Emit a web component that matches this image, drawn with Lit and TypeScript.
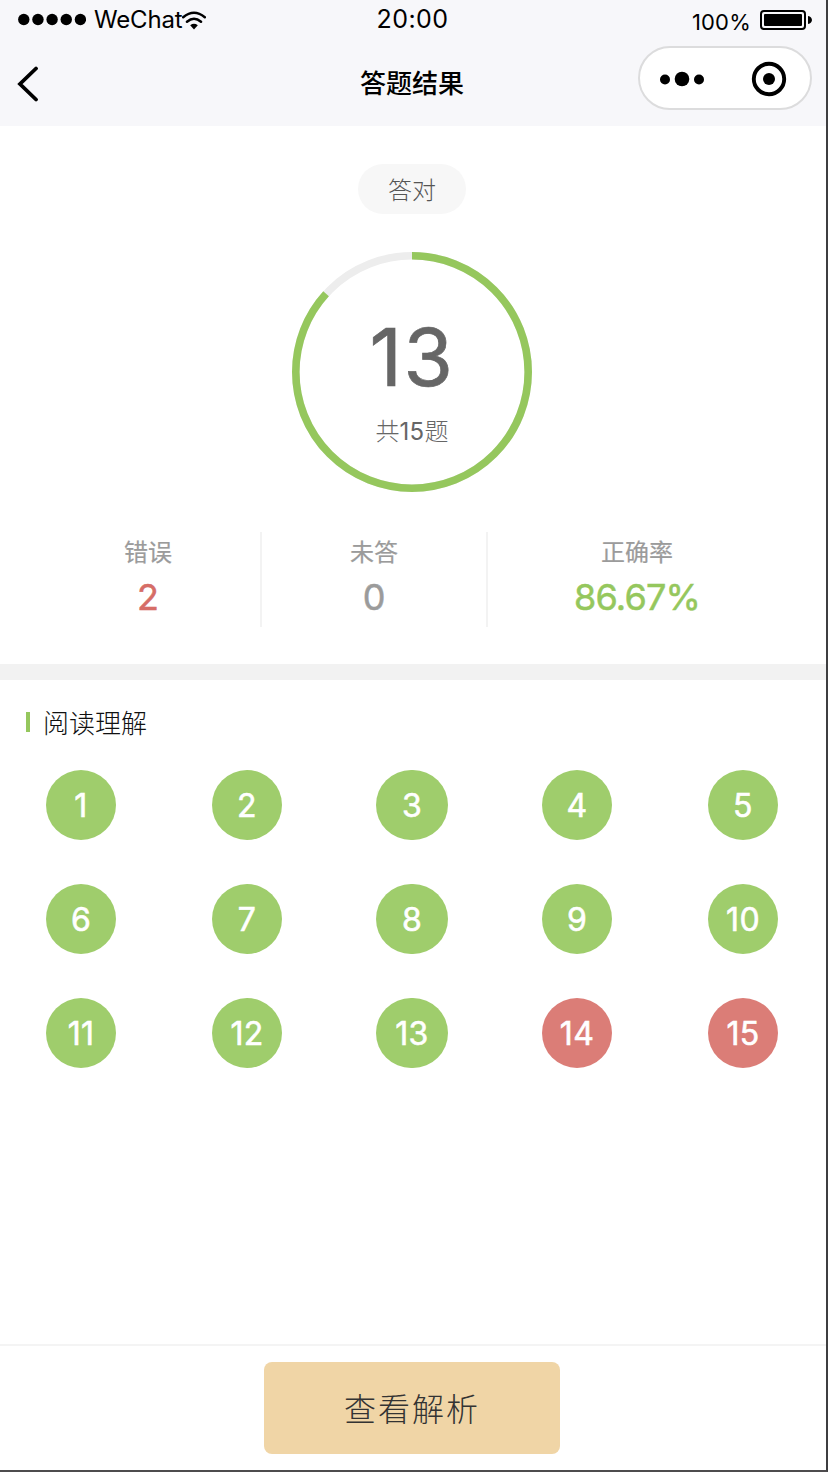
import { LitElement, html, css, svg } from "lit";
import { customElement, property } from "lit/decorators.js";
import { classMap } from "lit/directives/class-map.js";

const FONT = css`Inter, "Noto Sans CJK SC", sans-serif`;

@customElement("status-bar")
class StatusBar extends LitElement {
  static styles = css`
    :host { display: block; height: 40px; font-family: ${FONT}; color: #000; }
    .bar { display: grid; grid-template-columns: 1fr auto 1fr; height: 40px; }
    .left { display: flex; padding-left: 18px; align-items: flex-start; }
    .dots { margin-top: 13px; }
    .carrier { font-size: 24px; line-height: 40px; margin-left: 8px; letter-spacing: -0.15px; }
    .wifi { margin-top: 11px; margin-left: -1px; }
    .time { font-size: 25px; line-height: 39px; letter-spacing: 0.4px; margin-left: 1px; }
    .right { display: flex; justify-content: flex-end; padding-right: 12px; }
    .pct { font-size: 22px; line-height: 45px; margin-right: 9px; letter-spacing: 0.2px; }
    .battery { margin-top: 9px; }
    svg { display: block; }
  `;
  render() {
    return html`<div class="bar">
      <div class="left">
        <svg class="dots" width="68" height="13" viewBox="0 0 68 13">
          ${[0, 1, 2, 3, 4].map((i) => svg`<circle cx=${5.8 + i * 14.15} cy="6.5" r="5.7" />`)}
        </svg>
        <span class="carrier">WeChat</span>
        <svg class="wifi" width="24" height="19" viewBox="0 0 24 19">
          <path d="M1.2 6.2Q12 -2.6 22.8 6.2M5 10.7Q12 4.8 19 10.7" fill="none" stroke="#000" stroke-width="2.5" stroke-linecap="round" />
          <path d="M8.2 14.2Q12 11.5 15.8 14.2L12 18.6Z" />
        </svg>
      </div>
      <div class="time">20:00</div>
      <div class="right">
        <span class="pct">100%</span>
        <svg class="battery" width="52" height="22" viewBox="0 0 52 22">
          <rect x="1" y="2" width="44" height="18" rx="3" fill="none" stroke="#000" stroke-width="2" />
          <rect x="4" y="5" width="38" height="12" rx="1" />
          <path d="M48 7c5.300 1 5.300 7 0 8z" />
        </svg>
      </div>
    </div>`;
  }
}

@customElement("nav-bar")
class NavBar extends LitElement {
  @property() heading = "";
  static styles = css`
    :host { display: block; height: 86px; font-family: ${FONT}; }
    .nav { display: grid; grid-template-columns: 1fr auto 1fr; height: 86px; }
    .back { margin: 26px 0 0 17px; display: block; }
    .title { font-size: 26px; font-weight: 500; line-height: 88px; color: #000; }
    .capsule {
      box-sizing: border-box; width: 174px; height: 64px; margin: 6px 12px 0 0; justify-self: end;
      border: 2px solid #dcdcdd; border-radius: 32px; background: #fff;
    }
    svg { display: block; }
  `;
  render() {
    return html`<div class="nav">
      <svg class="back" width="22" height="36" viewBox="0 0 22 36">
        <path d="M19 2.500L3 18L19 33.500" fill="none" stroke="#000" stroke-width="3.800" stroke-linecap="round" stroke-linejoin="miter" />
      </svg>
      <div class="title">${this.heading}</div>
      <div class="capsule">
        <svg width="170" height="60" viewBox="0 0 170 60">
          <circle cx="25" cy="31.500" r="5" /><circle cx="42" cy="31" r="7.300" /><circle cx="59" cy="31.500" r="5" />
          <circle cx="129" cy="31" r="15.200" fill="none" stroke="#000" stroke-width="3.900" />
          <circle cx="129" cy="31" r="6" />
        </svg>
      </div>
    </div>`;
  }
}

@customElement("score-ring")
class ScoreRing extends LitElement {
  @property({ type: Number }) correct = 0;
  @property({ type: Number }) total = 1;
  static styles = css`
    :host { display: block; width: 240px; height: 240px; font-family: ${FONT}; color: #666; }
    .ring { display: grid; width: 240px; height: 240px; }
    .ring > * { grid-area: 1 / 1; }
    .label { display: flex; flex-direction: column; align-items: center; }
    .score { font-size: 80px; line-height: 96px; margin-top: 57px; letter-spacing: 1.5px; font-weight: 400; -webkit-text-stroke: 0.7px #666; }
    .total { font-size: 24px; line-height: 36px; margin-top: 9px; font-weight: 300; }
    .total span { font-weight: 400; letter-spacing: 0.2px; }
  `;
  render() {
    const r = 116.2;
    const len = 2 * Math.PI * r;
    const done = (len * this.correct) / this.total;
    return html`<div class="ring">
      <svg width="240" height="240" viewBox="0 0 240 240">
        <circle cx="120" cy="120" r=${r} fill="none" stroke="#ededed" stroke-width="7.600" />
        ${svg`<circle cx="120" cy="120" r=${r} fill="none" stroke="#95c75d" stroke-width="7.600"
          stroke-dasharray="${done} ${len}" transform="rotate(-90 120 120)" />`}
      </svg>
      <div class="label">
        <div class="score">${this.correct}</div>
        <div class="total">共<span>${this.total}</span>题</div>
      </div>
    </div>`;
  }
}

@customElement("app-root")
class AppRoot extends LitElement {
  private total = 15;
  private wrong = [14, 15];
  static styles = css`
    :host { display: block; font-family: ${FONT}; }
    .page {
      box-sizing: border-box; width: 828px; height: 1472px; background: #fff; overflow: hidden;
      border-right: 2px solid #3e3e40; border-bottom: 2px solid #4e4c4e;
      display: flex; flex-direction: column;
    }
    .head { height: 126px; background: #f7f7fa; flex: none; }
    .head status-bar, .head nav-bar { width: 824px; }
    .summary { width: 824px; height: 538px; display: flex; flex-direction: column; align-items: center; }
    .pill {
      margin-top: 38px; width: 108px; height: 50px; border-radius: 25px; background: #f7f7f7;
      text-align: center; font-size: 24px; line-height: 53px; font-weight: 300; color: #555;
    }
    score-ring { margin-top: 38px; }
    .stats { margin-top: 40px; width: 752px; display: flex; height: 95px; }
    .stat { flex: none; width: 224px; display: flex; flex-direction: column; align-items: center; }
    .stat + .stat { border-left: 2px solid #f3f3f3; }
    .stat.wide { width: 298px; }
    .name { font-size: 24px; line-height: 36px; margin-top: 3px; color: #9b9b9b; -webkit-text-stroke: 0.2px #9b9b9b; }
    .value { font-size: 36px; line-height: 44px; margin-top: 4px; font-weight: 400; color: #9b9b9b; -webkit-text-stroke: 0.5px currentColor; }
    .value.bad { color: #d66d67; }
    .value.good { color: #95c75d; letter-spacing: -0.8px; }
    .gap { height: 16px; background: #f2f2f2; flex: none; }
    .section { height: 90px; display: flex; align-items: flex-start; padding-left: 26px; box-sizing: border-box; }
    .mark { width: 4px; height: 20px; background: #95c75d; margin-top: 32px; }
    .section-name { font-size: 26px; line-height: 40px; font-weight: 300; color: #111; margin: 24px 0 0 13px; }
    .grid { width: 826px; display: grid; grid-template-columns: 166px 165px 165px 166px 70px; row-gap: 44px; padding-left: 46px; box-sizing: border-box; }
    .num {
      width: 70px; height: 70px; border-radius: 35px; background: #9fcd6c; color: #fff;
      font-size: 32px; line-height: 71px; font-weight: 400; -webkit-text-stroke: 0.6px #fff; letter-spacing: 0.3px; text-align: center;
    }
    .num.third { width: 72px; margin-left: -1px; }
    .num.bad { background: #db7d77; }
    .foot { margin-top: auto; height: 126px; box-sizing: border-box; border-top: 2px solid #f4f4f4; padding: 16px 0 0 264px; }
    .btn {
      display: block; width: 296px; height: 92px; padding: 3px 0 0; border: 0; border-radius: 8px; background: #f0d5a6;
      font-family: ${FONT}; font-size: 32px; font-weight: 300; letter-spacing: 2px; color: #333; line-height: 89px;
    }
  `;
  render() {
    const correct = this.total - this.wrong.length;
    const rate = ((correct / this.total) * 100).toFixed(2);
    return html`<div class="page">
      <div class="head">
        <status-bar></status-bar>
        <nav-bar heading="答题结果"></nav-bar>
      </div>
      <div class="summary">
        <div class="pill">答对</div>
        <score-ring .correct=${correct} .total=${this.total}></score-ring>
        <div class="stats">
          <div class="stat"><div class="name">错误</div><div class="value bad">${this.wrong.length}</div></div>
          <div class="stat"><div class="name">未答</div><div class="value">0</div></div>
          <div class="stat wide"><div class="name">正确率</div><div class="value good">${rate}%</div></div>
        </div>
      </div>
      <div class="gap"></div>
      <div class="section"><div class="mark"></div><div class="section-name">阅读理解</div></div>
      <div class="grid">
        ${Array.from({ length: this.total }, (_, i) => i + 1).map(
          (n) => html`<div class=${classMap({ num: true, third: n % 5 === 3, bad: this.wrong.includes(n) })}>${n}</div>`
        )}
      </div>
      <div class="foot"><button class="btn">查看解析</button></div>
    </div>`;
  }
}
